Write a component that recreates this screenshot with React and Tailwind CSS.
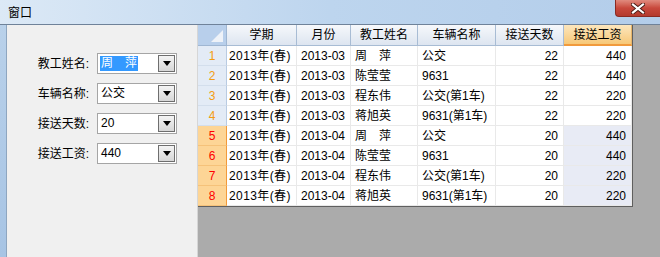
import React from "react";

const FONT = { fontFamily: '"Liberation Sans", "Noto Sans CJK SC", sans-serif' };

const cols = [
  { key: "term", title: "学期", w: "w-[70px]", align: "left" },
  { key: "month", title: "月份", w: "w-[54px]", align: "left" },
  { key: "name", title: "教工姓名", w: "w-[67px]", align: "left" },
  { key: "car", title: "车辆名称", w: "w-[78px]", align: "left" },
  { key: "days", title: "接送天数", w: "w-[68px]", align: "right" },
  { key: "pay", title: "接送工资", w: "w-[68px]", align: "right" },
];

const rows = [
  ["2013年(春)", "2013-03", "周　萍", "公交", "22", "440"],
  ["2013年(春)", "2013-03", "陈莹莹", "9631", "22", "440"],
  ["2013年(春)", "2013-03", "程东伟", "公交(第1车)", "22", "220"],
  ["2013年(春)", "2013-03", "蒋旭英", "9631(第1车)", "22", "220"],
  ["2013年(春)", "2013-04", "周　萍", "公交", "20", "440"],
  ["2013年(春)", "2013-04", "陈莹莹", "9631", "20", "440"],
  ["2013年(春)", "2013-04", "程东伟", "公交(第1车)", "20", "220"],
  ["2013年(春)", "2013-04", "蒋旭英", "9631(第1车)", "20", "220"],
];

function Combo({ value, selected }) {
  return (
    <div className="w-[80px] h-[21px] border border-[#a5a5a5] bg-white flex items-center justify-between pl-[2px] pr-[1px]">
      {selected ? (
        <span className="bg-[#3399ff] text-white text-[12px] leading-[15px] pl-[1px] w-[38px] whitespace-nowrap">{value}</span>
      ) : (
        <span className="text-[12px] leading-[15px] text-black pl-[1px] whitespace-nowrap">{value}</span>
      )}
      <div className="w-[17px] h-[17px] border border-[#6e6e6e] bg-gradient-to-b from-[#f4f4f4] to-[#d6d6d6] flex items-center justify-center">
        <svg width="8" height="5" viewBox="0 0 8 5"><path d="M0 0h8L4 5z" fill="#000" /></svg>
      </div>
    </div>
  );
}

function Field({ label, value, selected }) {
  return (
    <div className="flex items-center h-[21px]">
      <div className="w-[83px] text-right text-[12px] text-black pr-[1px]">{label}:</div>
      <div className="ml-[7px]"><Combo value={value} selected={selected} /></div>
    </div>
  );
}

export default function App() {
  return (
    <div className="w-[660px] h-[257px] overflow-hidden flex flex-col bg-[#ababab]" style={FONT}>
      <div className="h-[24px] shrink-0 relative bg-gradient-to-r from-[#dce9f6] via-[#bdd5ee] to-[#b3cdea] flex items-center pl-[8px]">
        <span className="text-[12px] text-black leading-none mt-[1px]">窗口</span>
        <div className="absolute right-0 top-0 w-[45px] h-[17px] rounded-bl-[4px] border border-[#8a2a22] border-t-0 border-r-0 bg-gradient-to-b from-[#e08a7e] via-[#c8483c] to-[#b33a2e] flex items-center justify-center">
          <svg width="14" height="11" viewBox="0 0 14 11">
            <path d="M2 1.5l10 8M12 1.5l-10 8" stroke="#4a1a14" strokeWidth="4" strokeLinecap="square" />
            <path d="M2 1.5l10 8M12 1.5l-10 8" stroke="#fff" strokeWidth="2.2" strokeLinecap="square" />
          </svg>
        </div>
      </div>
      <div className="flex flex-1 border-t border-[#6f8299]">
        <div className="w-[7px] shrink-0 bg-gradient-to-b from-[#b9d1ea] to-[#a7c4e4] border-r border-[#8ea6c0]" />
        <div className="w-[191px] shrink-0 bg-[#f0f0f0] border-r border-[#d6d6d6] pt-[28px] flex flex-col gap-[9px]">
          <Field label="教工姓名" value="周　萍" selected />
          <Field label="车辆名称" value="公交" />
          <Field label="接送天数" value="20" />
          <Field label="接送工资" value="440" />
        </div>
        <div className="flex-1 bg-[#ababab]">
          <div className="w-[435px] border-r border-b border-[#5f5f5f] bg-white text-[12px] text-black">
            <div className="flex h-[21px]">
              <div className="w-[29px] bg-[#b8cfeb] border-r border-b border-[#9fb6d2] flex items-end justify-end p-[3px]">
                <svg width="12" height="12" viewBox="0 0 12 12"><path d="M12 0V12H0z" fill="#eef2f8" /></svg>
              </div>
              {cols.map((c) => (
                <div
                  key={c.key}
                  className={
                    c.key === "pay"
                      ? c.w + " bg-gradient-to-b from-[#fce6bd] to-[#f7c877] border-b-2 border-[#f19a3c] border-r border-r-[#e6b46a] flex items-center justify-center"
                      : c.w + " bg-gradient-to-b from-[#f6f8fb] to-[#dde5f0] border-r border-b border-[#a8bcd4] flex items-center justify-center"
                  }
                >
                  {c.title}
                </div>
              ))}
            </div>
            {rows.map((r, i) => {
              const sel = i >= 4;
              return (
                <div key={i} className="flex h-[20px]">
                  <div
                    className={
                      sel
                        ? "w-[29px] bg-[#fdd596] border-r border-[#f29a3a] border-b border-b-[#f5c27a] flex items-center justify-center text-[#ff0000]"
                        : "w-[29px] bg-[#e3ebf6] border-r border-[#b9cbe2] border-b border-b-[#d3deec] flex items-center justify-center text-[#f39c12]"
                    }
                  >
                    {i + 1}
                  </div>
                  {cols.map((c, j) => (
                    <div
                      key={c.key}
                      className={
                        c.w +
                        " border-r border-b border-[#e9e9e9] flex items-center whitespace-nowrap " +
                        (c.align === "right" ? "justify-end pr-[5px] " : j === 0 ? "pl-[2px] tracking-[0.4px] " : "pl-[4px] ") +
                        (c.key === "pay" && sel ? "bg-[#e8ebf5]" : "bg-white")
                      }
                    >
                      {r[j]}
                    </div>
                  ))}
                </div>
              );
            })}
          </div>
        </div>
      </div>
    </div>
  );
}
